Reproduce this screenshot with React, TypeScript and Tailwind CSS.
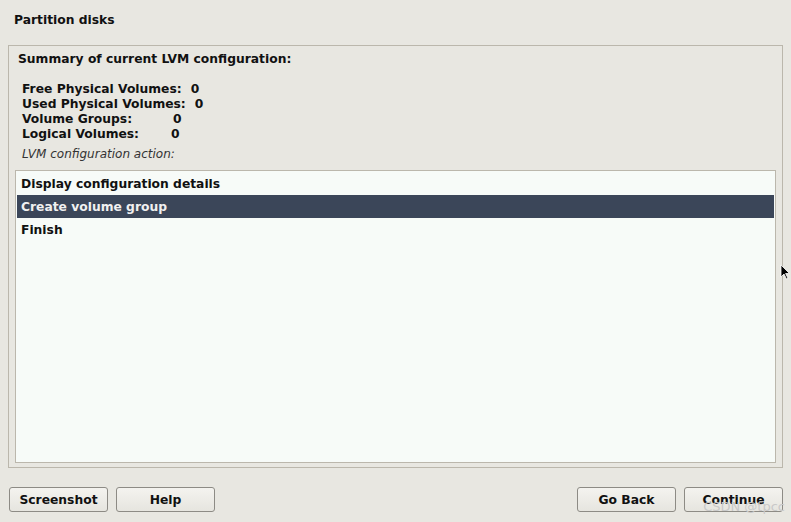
import React from "react";

const stats: [string, string, number][] = [
  ["Free Physical Volumes:", "0", 9],
  ["Used Physical Volumes:", "0", 9],
  ["Volume Groups:", "0", 41],
  ["Logical Volumes:", "0", 32],
];

const items = ["Display configuration details", "Create volume group", "Finish"];

function Btn({ label }: { label: string }) {
  return (
    <button className="w-[99px] h-[25px] pt-px rounded-[3px] border border-[#8d8b85] bg-gradient-to-b from-[#f4f3ef] to-[#e6e5df] text-[12.3px] font-bold text-[#111] leading-none">
      {label}
    </button>
  );
}

export default function App() {
  return (
    <div
      className="relative w-[791px] h-[522px] overflow-hidden bg-[#e8e7e1] text-[12.3px] text-[#111]"
      style={{ fontFamily: '"DejaVu Sans", sans-serif' }}
    >
      <div className="h-[45px] pl-[14px] pt-[11px] font-bold">Partition disks</div>

      <div className="mx-[8px] h-[423px] border border-[#bbb7ac] px-[6px] pt-[6px] flex flex-col">
        <div className="pl-[3px] font-bold leading-[15px]">Summary of current LVM configuration:</div>
        <div className="pl-[7px] mt-[15px] font-bold leading-[15px]">
          {stats.map(([k, v, gap]) => (
            <div key={k} className="flex">
              <span>{k}</span>
              <span style={{ marginLeft: gap }}>{v}</span>
            </div>
          ))}
        </div>
        <div className="pl-[7px] mt-[5px] italic text-[12px] text-[#333] leading-[15px]">
          LVM configuration action:
        </div>
        <div className="mt-[8px] h-[293px] border border-[#bbb7ac] bg-[#f7fbf8] p-px">
          {items.map((it, i) => (
            <div
              key={it}
              className={`h-[23px] pl-[4px] pt-[2px] flex items-center font-bold ${
                i === 1 ? "bg-[#3b4659] text-[#f0f0f0]" : ""
              }`}
            >
              {it}
            </div>
          ))}
        </div>
      </div>

      <div className="flex items-center justify-between pl-[9px] pr-[8px] mt-[19px]">
        <div className="flex gap-[8px]">
          <Btn label="Screenshot" />
          <Btn label="Help" />
        </div>
        <div className="flex gap-[8px]">
          <Btn label="Go Back" />
          <Btn label="Continue" />
        </div>
      </div>

      <div className="absolute right-[6px] bottom-[6px] text-[13px] text-[#c9c9c9]">
        CSDN @tpcc
      </div>

      <svg className="absolute left-[780px] top-[264px]" width="11" height="16" viewBox="0 0 11 16">
        <path d="M1 1 L1 13 L4 10 L6.5 15 L8 14.3 L5.6 9.5 L9.5 9.5 Z" fill="#000" stroke="#fff" strokeWidth="0.8" />
      </svg>
    </div>
  );
}
